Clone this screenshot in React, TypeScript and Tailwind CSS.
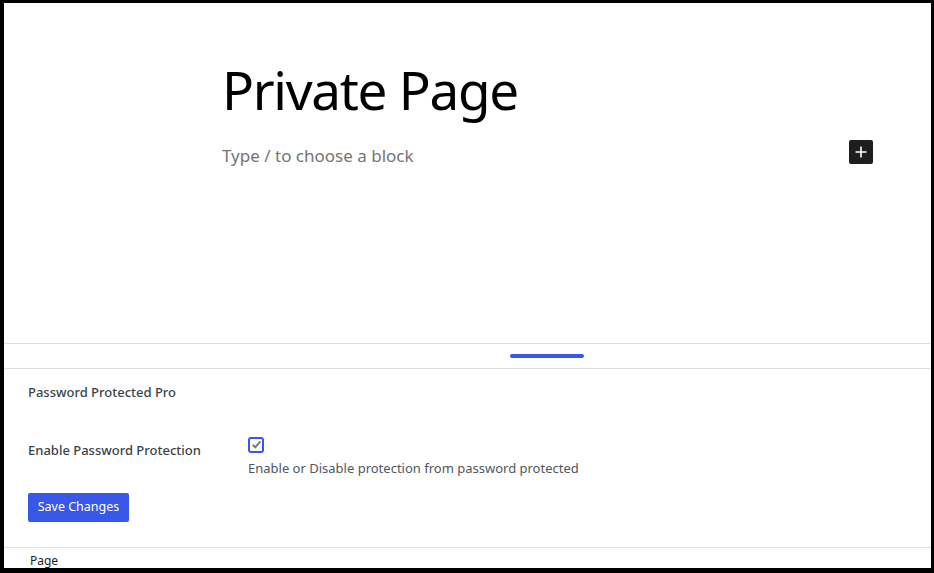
import React from 'react';

const font = { fontFamily: '"Noto Sans", "Open Sans", sans-serif' };

export default function App() {
  return (
    <div
      className="w-[934px] h-[573px] bg-white border-black border-t-[3px] border-l-4 border-r-[3px] border-b-[5px] flex flex-col overflow-hidden"
      style={font}
    >
      {/* editor canvas */}
      <div className="h-[340px] flex flex-col pl-[218px] pr-[58px]">
        <h1 className="mt-[52px] text-[53px] leading-[70px] text-black font-normal tracking-[-1.3px]">
          Private Page
        </h1>
        <div className="mt-[15px] flex items-start justify-between">
          <span className="mt-[3px] text-[17px] text-[#757575]">Type / to choose a block</span>
          <button className="w-6 h-6 bg-[#1e1e1e] rounded-[2px] flex items-center justify-center">
            <svg width="14" height="14" viewBox="0 0 14 14">
              <path d="M7 1.5v11M1.5 7h11" stroke="white" strokeWidth="1.6" />
            </svg>
          </button>
        </div>
      </div>

      {/* resize handle */}
      <div className="h-[26px] border-y border-[#dddddd] flex items-center pl-[506px]">
        <div className="w-[74px] h-1 rounded-full bg-[#3858e9]" />
      </div>

      {/* meta box */}
      <div className="flex-1 px-6 pt-[14px] text-[13px]">
        <div className="font-medium text-[#3c434a]">Password Protected Pro</div>
        <div className="mt-[34px] flex">
          <div className="w-[220px] pt-[4px] font-medium text-[#3c434a]">
            Enable Password Protection
          </div>
          <div className="flex flex-col">
            <div className="w-4 h-4 border-2 border-[#3858e9] rounded-[3px] flex items-center justify-center">
              <svg width="11" height="11" viewBox="0 0 10 10">
                <path d="M1.5 5.2 4 7.5 8.5 2.2" fill="none" stroke="#7a7a7a" strokeWidth="1.8" />
              </svg>
            </div>
            <div className="mt-[6px] text-[#50575e]">
              Enable or Disable protection from password protected
            </div>
          </div>
        </div>
        <button className="mt-[15px] h-[29px] w-[101px] bg-[#3858e9] text-white rounded-[2px] text-[12.5px]">
          Save Changes
        </button>
      </div>

      {/* footer breadcrumb */}
      <div className="h-[21px] border-t border-[#e0e0e0] pl-[26px] text-[12px] text-[#1e1e1e] leading-[25px]">
        Page
      </div>
    </div>
  );
}
